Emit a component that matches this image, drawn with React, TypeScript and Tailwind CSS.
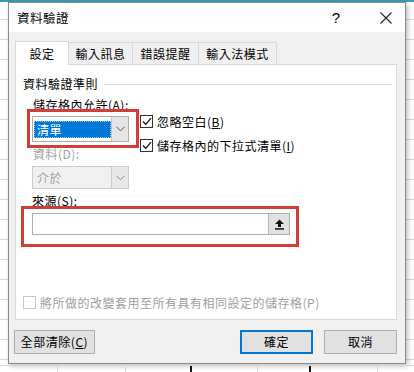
import React from "react";

const FONT = "font-['Noto_Sans_CJK_TC','Microsoft_JhengHei',sans-serif]";

function Chevron({ color = "#555" }: { color?: string }) {
  return (
    <svg width="9" height="6" viewBox="0 0 9 6">
      <polyline points="0.5,0.8 4.5,4.8 8.5,0.8" fill="none" stroke={color} strokeWidth="1" />
    </svg>
  );
}

function Check() {
  return (
    <div className="w-[13px] h-[13px] border border-[#333] bg-white flex items-center justify-center">
      <svg width="10" height="9" viewBox="0 0 10 9">
        <polyline points="1,4.5 3.8,7.3 9,1.2" fill="none" stroke="#111" strokeWidth="1.3" />
      </svg>
    </div>
  );
}

const TABS = ["輸入訊息", "錯誤提醒", "輸入法模式"];
const TAB_W = ["w-[64px]", "w-[66px]", "w-[78px]"];

export default function App() {
  return (
    <div className={`w-[414px] h-[372px] overflow-hidden bg-white ${FONT} text-[12px] text-black bg-[repeating-linear-gradient(to_bottom,transparent_0,transparent_19px,#d6d6d6_19px,#d6d6d6_20px)]`}>
      <div className="h-[2px] bg-[#3f9bb0]" />
      {/* dialog */}
      <div className="ml-[8px] w-[398px] h-[362px] border border-[#8a8a8a] bg-[#f0f0f0] shadow-[2px_2px_5px_rgba(0,0,0,0.25)] flex flex-col">
        {/* title bar */}
        <div className="h-[29px] bg-white flex items-center pl-[8px] pr-[10px]">
          <span className="text-[12.5px] leading-[16px] tracking-[0.5px]">資料驗證</span>
          <span className="ml-auto w-[14px] text-center text-[15px] leading-[16px] mr-[37px] font-['Liberation_Sans',sans-serif]">?</span>
          <svg width="12" height="12" viewBox="0 0 12 12" className="mr-[3px]">
            <path d="M0.5 0.5 L11.5 11.5 M11.5 0.5 L0.5 11.5" stroke="#222" strokeWidth="1.1" />
          </svg>
        </div>
        {/* body */}
        <div className="pl-[6px] pt-[8px] flex-1 flex flex-col">
          {/* tabs */}
          <div className="flex items-end h-[24px]">
            <div className="w-[54px] h-[24px] bg-white border-l border-t border-r border-[#d9d9d9] -mb-px relative z-10 flex items-center justify-center leading-[16px] pt-[1px] tracking-[0.5px]">
              設定
            </div>
            {TABS.map((t, i) => (
              <div key={t} className={`${TAB_W[i]} h-[22px] border-t border-r border-[#d9d9d9] bg-[#f0f0f0] flex items-center justify-center leading-[16px] tracking-[0.5px]`}>
                {t}
              </div>
            ))}
          </div>
          {/* panel */}
          <div className="relative w-[382px] h-[256px] bg-white border border-[#d9d9d9] flex flex-col">
            <div className="flex items-center pt-[11px] pl-[7px] pr-[4px] h-[27px]">
              <span className="leading-[16px] tracking-[0.5px]">資料驗證準則</span>
              <div className="flex-1 h-px bg-[#dcdcdc] ml-[6px]" />
            </div>
            <div className="flex pl-[16px]">
              <div className="flex flex-col w-[97px]">
                <div className="mt-[5px] pl-[1px] h-[16px] leading-[16px] tracking-[0.5px]">儲存格內允許(<u>A</u>):</div>
                <div className="mt-[3px] h-[26px] border border-[#adadad] bg-white flex">
                  <div className="flex-1 flex items-center pl-[1px]">
                    <div className="w-full h-[17px] bg-[#0078d7] border border-dotted border-[#9cc9f0] text-white leading-[15px] pl-[2px] tracking-[0.5px]">清單</div>
                  </div>
                  <div className="w-[17px] bg-[#e5e5e5] border-l border-[#c4c4c4] flex items-center justify-center">
                    <Chevron />
                  </div>
                </div>
                <div className="mt-[4px] pl-[1px] h-[16px] leading-[16px] text-[#a0a0a0] tracking-[0.5px]">資料(D):</div>
                <div className="mt-[4px] h-[23px] border border-[#cccccc] bg-[#f0f0f0] flex">
                  <div className="flex-1 flex items-center pl-[4px] text-[#a0a0a0] leading-[16px] tracking-[0.5px]">介於</div>
                  <div className="w-[17px] bg-[#e8e8e8] border-l border-[#cccccc] flex items-center justify-center">
                    <Chevron color="#8a8a8a" />
                  </div>
                </div>
              </div>
              <div className="ml-[11px] mt-[23px] flex flex-col gap-[11px]">
                <div className="flex items-center gap-[4px] h-[13px]">
                  <Check />
                  <span className="leading-[16px] tracking-[0.5px]">忽略空白(<u>B</u>)</span>
                </div>
                <div className="flex items-center gap-[4px] h-[13px]">
                  <Check />
                  <span className="leading-[16px] tracking-[0.5px]">儲存格內的下拉式清單(<u>I</u>)</span>
                </div>
              </div>
            </div>
            <div className="pl-[16px] mt-[4px] h-[16px] leading-[16px] tracking-[0.5px]">來源(<u>S</u>):</div>
            <div className="ml-[16px] mt-[4px] w-[258px] h-[22px] border border-[#adadad] bg-white flex justify-end">
              <div className="w-[21px] h-full bg-[#e1e1e1] border-l border-[#b5b5b5] flex items-center justify-center">
                <svg width="11" height="11" viewBox="0 0 11 11">
                  <path d="M5.5 0.5 L10 5 L7 5 L7 8 L4 8 L4 5 L1 5 Z" fill="#111" />
                  <rect x="1" y="9.2" width="9" height="1.5" fill="#111" />
                </svg>
              </div>
            </div>
            <div className="mt-[61px] pl-[7px] flex items-center gap-[4px] h-[13px]">
              <div className="w-[13px] h-[13px] border border-[#c8c8c8] bg-white" />
              <span className="leading-[16px] text-[#a0a0a0] tracking-[0.5px]">將所做的改變套用至所有具有相同設定的儲存格(P)</span>
            </div>
            {/* annotation boxes */}
            <div className="absolute left-[11px] top-[44px] w-[112px] h-[39px] border-[3px] border-[#d43c3a]" />
            <div className="absolute left-[5px] top-[141px] w-[278px] h-[41px] border-[3px] border-[#d43c3a]" />
          </div>
          {/* buttons */}
          <div className="flex mt-[10px] pr-[8px]">
            <div className="-ml-[1px] w-[81px] h-[24px] bg-[#e1e1e1] border border-[#adadad] flex items-center justify-center leading-[16px] tracking-[0.5px]">
              全部清除(<u>C</u>)
            </div>
            <div className="ml-auto w-[73px] h-[24px] bg-[#e1e1e1] border-2 border-[#0078d7] flex items-center justify-center leading-[16px] tracking-[0.5px]">
              確定
            </div>
            <div className="ml-[11px] w-[73px] h-[24px] bg-[#e1e1e1] border border-[#adadad] flex items-center justify-center leading-[16px] tracking-[0.5px]">
              取消
            </div>
          </div>
        </div>
      </div>
      {/* spreadsheet cells below */}
      <div className="flex h-[8px] mt-[1px] border-t border-[#d6d6d6]">
        <div className="w-[58px] border-r border-[#d6d6d6]" />
        <div className="w-[68px] border-r border-[#d6d6d6]" />
        <div className="w-[66px] border-r-2 border-[#111]" />
        <div className="w-[66px] border-r border-[#d6d6d6]" />
        <div className="w-[53px] border-r-2 border-[#111]" />
        <div className="w-[67px] border-r border-[#d6d6d6]" />
      </div>
    </div>
  );
}
